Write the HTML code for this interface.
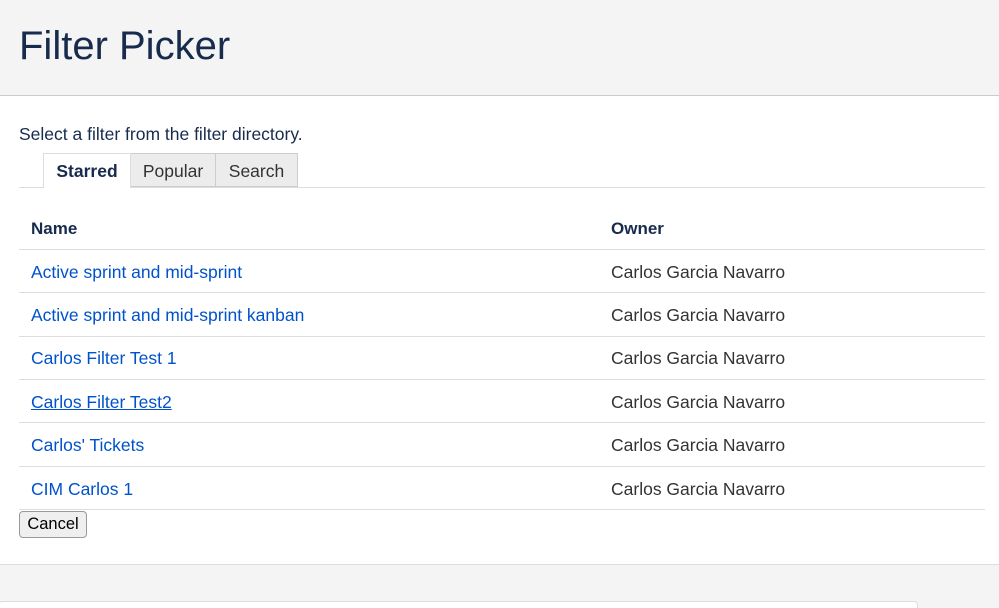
<!DOCTYPE html>
<html style="width:999px;height:608px;overflow:hidden"><head><style>
body{margin:0;width:999px;height:608px;overflow:hidden;background:#fff;font-family:"Liberation Sans",Arial,sans-serif;color:#172b4d;position:relative}
.hdr{position:absolute;left:0;top:0;width:999px;height:95px;background:#f4f4f4;border-bottom:1px solid #ccc}
.hdr h1{position:absolute;left:19px;top:23px;margin:0;font-size:40px;font-weight:normal;color:#172b4d;line-height:46px}
.intro{position:absolute;left:19px;top:124px;font-size:17.5px;color:#172b4d}
.tabs{position:absolute;left:19px;top:187px;width:966px;border-top:1px solid #ddd}
.tab{position:absolute;top:153px;height:34px;line-height:35px;font-size:17.5px;text-align:center;box-sizing:border-box}
.t1{left:43px;width:88px;background:#fff;border:1px solid #ddd;border-bottom:none;font-weight:bold;color:#172b4d;height:35px}
.t2{left:130px;width:86px;background:#ececec;border:1px solid #ccc;color:#333}
.t3{left:215px;width:83px;background:#ececec;border:1px solid #ccc;color:#333}
table{position:absolute;left:19px;top:206px;width:966px;border-collapse:collapse;font-size:17.5px}
td,th{text-align:left;padding:0 12px;border-bottom:1px solid #ddd;height:43.4px;box-sizing:border-box;padding-top:2px}
th{font-weight:bold;color:#172b4d;font-size:17px;padding-top:4px}
td:first-child,th:first-child{width:580px}
td a{color:#0052cc;text-decoration:none}
td{color:#333}
.btn{position:absolute;left:19px;top:511px;width:68px;height:27px;box-sizing:border-box;border:1px solid #999;border-radius:4px;background:#efefef;font-size:16.5px;text-align:center;line-height:25px;color:#000}
.ftr{position:absolute;left:0;top:564px;width:999px;height:44px;background:#f4f4f4;border-top:1px solid #ddd}
.box{position:absolute;left:-2px;top:601px;width:918px;height:7px;background:#fff;border:1px solid #ddd;border-bottom:none;border-radius:4px 4px 0 0}
</style></head><body>
<div class="hdr"><h1>Filter Picker</h1></div>
<div class="intro">Select a filter from the filter directory.</div>
<div class="tabs"></div>
<div class="tab t2">Popular</div>
<div class="tab t3">Search</div>
<div class="tab t1">Starred</div>
<table>
<tr><th>Name</th><th>Owner</th></tr>
<tr><td><a>Active sprint and mid-sprint</a></td><td>Carlos Garcia Navarro</td></tr>
<tr><td><a>Active sprint and mid-sprint kanban</a></td><td>Carlos Garcia Navarro</td></tr>
<tr><td><a>Carlos Filter Test 1</a></td><td>Carlos Garcia Navarro</td></tr>
<tr><td><a style="text-decoration:underline">Carlos Filter Test2</a></td><td>Carlos Garcia Navarro</td></tr>
<tr><td><a>Carlos' Tickets</a></td><td>Carlos Garcia Navarro</td></tr>
<tr><td><a>CIM Carlos 1</a></td><td>Carlos Garcia Navarro</td></tr>
</table>
<div class="btn">Cancel</div>
<div class="ftr"></div>
<div class="box"></div>
</body></html>
